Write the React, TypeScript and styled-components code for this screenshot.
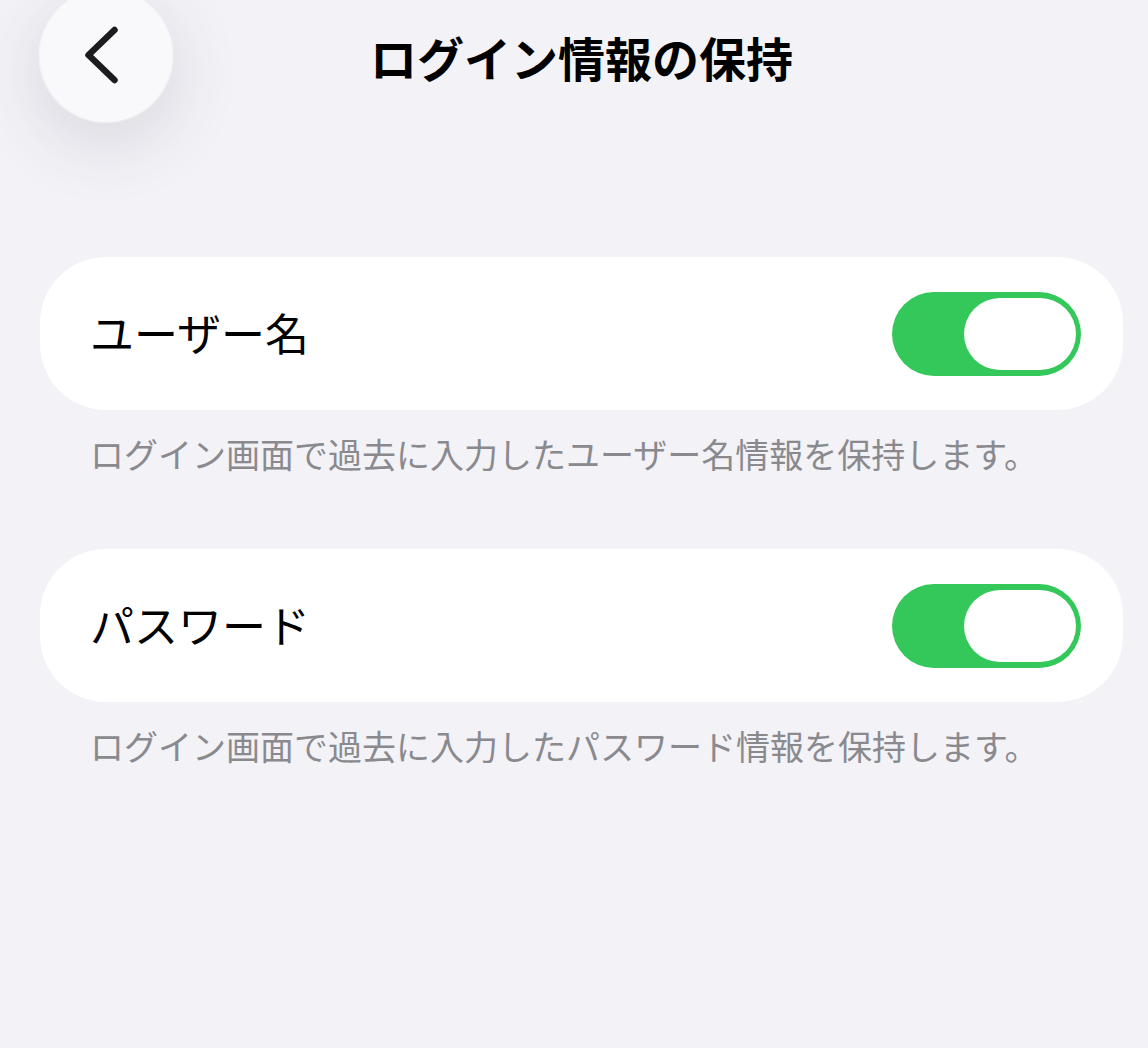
import styled, { createGlobalStyle } from "styled-components";

const GlobalStyle = createGlobalStyle`
  html, body {
    margin: 0;
    padding: 0;
    background: #f2f2f7;
  }
  body {
    font-family: "Noto Sans CJK JP", "Noto Sans", sans-serif;
    -webkit-font-smoothing: antialiased;
  }
`;

const Page = styled.div`
  width: 1148px;
  height: 1048px;
  box-sizing: border-box;
  padding: 0 25px 0 40px;
  background: #f2f2f7;
  overflow: hidden;
`;

const Header = styled.header`
  display: grid;
  grid-template-columns: 132px 1fr 132px;
  align-items: start;
  height: 112px;
`;

const BackButton = styled.button`
  width: 132px;
  height: 132px;
  margin-top: -10px;
  padding: 0;
  border: 0;
  border-radius: 50%;
  background: #f9f9fb;
  box-shadow: 0 18px 70px rgba(60, 60, 80, 0.16), 0 0 0 1.5px #ffffff;
  display: flex;
  align-items: center;
  justify-content: center;
`;

const Title = styled.h1`
  margin: 32px 0 0;
  text-align: center;
  font-size: 47px;
  line-height: 50px;
  font-weight: 700;
  color: #000;
`;

const List = styled.div`
  display: flex;
  flex-direction: column;
  margin-top: 145px;
`;

const Section = styled.section`
  display: flex;
  flex-direction: column;
  & + & {
    margin-top: 71px;
  }
`;

const Card = styled.div`
  height: 153px;
  box-sizing: border-box;
  padding: 0 42px 0 50px;
  background: #ffffff;
  border-radius: 66px;
  display: flex;
  align-items: center;
  justify-content: space-between;
`;

const Label = styled.span`
  font-size: 44px;
  color: #000;
  line-height: 1;
  margin-top: -3px;
`;

const Track = styled.div<{ $on: boolean }>`
  width: 189px;
  height: 84px;
  box-sizing: border-box;
  padding: 6px 5px;
  border-radius: 42px;
  background: ${(p) => (p.$on ? "#34c759" : "#e9e9eb")};
  display: flex;
  justify-content: ${(p) => (p.$on ? "flex-end" : "flex-start")};
`;

const Knob = styled.div`
  width: 112px;
  height: 72px;
  border-radius: 36px;
  background: #ffffff;
`;

const Note = styled.p`
  margin: 0;
  padding: 20px 50px 0;
  font-size: 34px;
  line-height: 48px;
  color: #8a8a8e;
  white-space: nowrap;
`;

function Toggle({ on }: { on: boolean }) {
  return (
    <Track $on={on}>
      <Knob />
    </Track>
  );
}

const settings = [
  {
    label: "ユーザー名",
    note: "ログイン画面で過去に入力したユーザー名情報を保持します。",
  },
  {
    label: "パスワード",
    note: "ログイン画面で過去に入力したパスワード情報を保持します。",
  },
];

export default function App() {
  return (
    <Page>
      <GlobalStyle />
      <Header>
        <BackButton aria-label="戻る">
          <svg width="132" height="132" viewBox="0 0 132 132" fill="none">
            <path
              d="M74.5 40 L48.5 65 L74.5 90"
              stroke="#1c1c1e"
              strokeWidth="6.5"
              strokeLinecap="round"
              strokeLinejoin="round"
            />
          </svg>
        </BackButton>
        <Title>ログイン情報の保持</Title>
        <div />
      </Header>
      <List>
        {settings.map((s) => (
          <Section key={s.label}>
            <Card>
              <Label>{s.label}</Label>
              <Toggle on />
            </Card>
            <Note>{s.note}</Note>
          </Section>
        ))}
      </List>
    </Page>
  );
}
